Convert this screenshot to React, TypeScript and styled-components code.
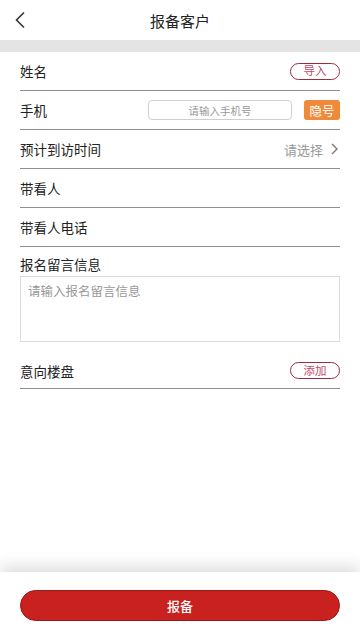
import React from 'react'
import styled, { createGlobalStyle } from 'styled-components'

const GlobalStyle = createGlobalStyle`
  html, body {
    margin: 0;
    padding: 0;
    background: #fff;
  }
  body {
    font-family: "Noto Sans CJK SC", "Noto Sans", sans-serif;
    color: #222;
  }
  * { box-sizing: border-box; }
`

const Page = styled.div`
  display: flex;
  flex-direction: column;
  height: 100vh;
  background: #fff;
`

const Header = styled.div`
  height: 40px;
  display: flex;
  align-items: center;
  justify-content: center;
  position: relative;
  flex-shrink: 0;
`

const BackButton = styled.div`
  position: absolute;
  left: 14px;
  top: 10px;
  width: 16px;
  height: 20px;
  display: flex;
  align-items: center;
`

const Title = styled.div`
  font-size: 15px;
  color: #222;
`

const Band = styled.div`
  height: 12px;
  background: #e4e4e4;
  flex-shrink: 0;
`

const Form = styled.div`
  flex: 1;
  padding: 0 20px;
  overflow: hidden;
`

const Row = styled.div`
  height: 39px;
  display: flex;
  align-items: center;
  justify-content: space-between;
  border-bottom: 1px solid #8f8f8f;
`

const Label = styled.div`
  font-size: 13.5px;
  color: #222;
`

const PillButton = styled.div`
  height: 17px;
  width: 50px;
  border: 1px solid #9b2c40;
  border-radius: 9px;
  display: flex;
  align-items: center;
  justify-content: center;
  font-size: 11.5px;
  color: #c2486a;
  line-height: 1;
`

const PhoneGroup = styled.div`
  display: flex;
  align-items: center;
  gap: 12px;
`

const PhoneInput = styled.div`
  width: 144px;
  height: 20px;
  border: 1px solid #cfcfcf;
  border-radius: 4px;
  display: flex;
  align-items: center;
  justify-content: center;
  font-size: 10.5px;
  color: #999;
`

const HideButton = styled.div`
  width: 36px;
  height: 20px;
  background: #ee8a3a;
  border-radius: 3px;
  color: #fff;
  font-size: 12.5px;
  display: flex;
  align-items: center;
  justify-content: center;
`

const Select = styled.div`
  display: flex;
  align-items: center;
  gap: 8px;
  font-size: 13px;
  color: #999;
  padding-right: 2px;
`

const MessageBlock = styled.div`
  padding-top: 7px;
`

const MessageLabel = styled(Label)`
  line-height: 20px;
`

const TextArea = styled.div`
  margin-top: 2px;
  height: 66px;
  border: 1px solid #dcdcdc;
  padding: 4px 7px;
  font-size: 12.5px;
  color: #999;
`

const LastRow = styled(Row)`
  margin-top: 11px;
  height: 36px;
`

const Footer = styled.div`
  flex-shrink: 0;
  height: 68px;
  padding: 18px 20px 0;
  background: #fff;
  box-shadow: 0 -6px 14px rgba(0, 0, 0, 0.13);
`

const SubmitButton = styled.div`
  height: 31px;
  border-radius: 16px;
  background: #c8211f;
  border: 1px solid #9a1a18;
  color: #fff;
  font-size: 13px;
  font-weight: 500;
  display: flex;
  align-items: center;
  justify-content: center;
`

const App: React.FC = () => {
  return (
    <Page>
      <GlobalStyle />
      <Header>
        <BackButton>
          <svg width="12" height="18" viewBox="0 0 12 18">
            <path d="M10 1.5 L2.5 9 L10 16.5" fill="none" stroke="#333" strokeWidth="1.6" />
          </svg>
        </BackButton>
        <Title>报备客户</Title>
      </Header>
      <Band />
      <Form>
        <Row>
          <Label>姓名</Label>
          <PillButton>导入</PillButton>
        </Row>
        <Row>
          <Label>手机</Label>
          <PhoneGroup>
            <PhoneInput>请输入手机号</PhoneInput>
            <HideButton>隐号</HideButton>
          </PhoneGroup>
        </Row>
        <Row>
          <Label>预计到访时间</Label>
          <Select>
            请选择
            <svg width="7" height="12" viewBox="0 0 7 12">
              <path d="M1 1 L6 6 L1 11" fill="none" stroke="#777" strokeWidth="1.4" />
            </svg>
          </Select>
        </Row>
        <Row>
          <Label>带看人</Label>
        </Row>
        <Row>
          <Label>带看人电话</Label>
        </Row>
        <MessageBlock>
          <MessageLabel>报名留言信息</MessageLabel>
          <TextArea>请输入报名留言信息</TextArea>
        </MessageBlock>
        <LastRow>
          <Label>意向楼盘</Label>
          <PillButton>添加</PillButton>
        </LastRow>
      </Form>
      <Footer>
        <SubmitButton>报备</SubmitButton>
      </Footer>
    </Page>
  )
}

export default App
